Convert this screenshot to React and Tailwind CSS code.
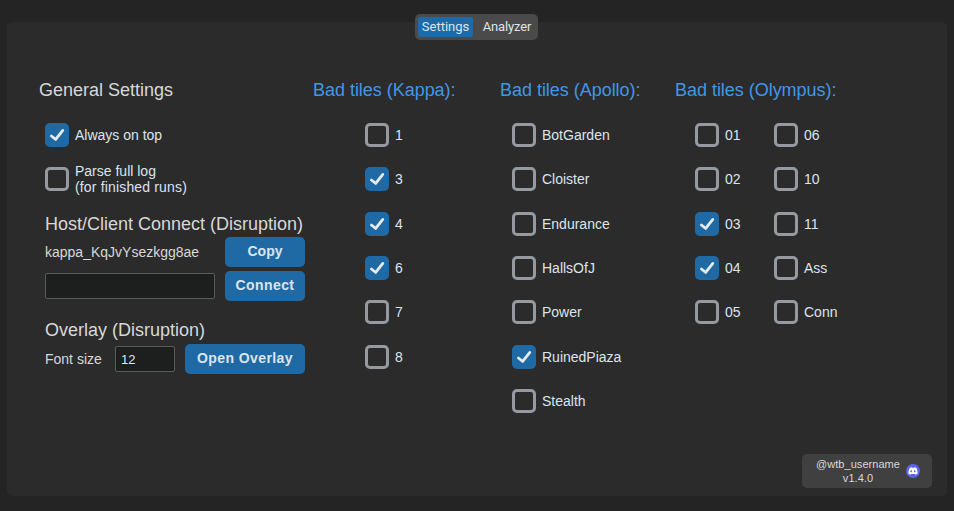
import React from "react";

function Box({ checked }) {
  if (!checked) {
    return <span className="h-6 w-6 shrink-0 rounded-[5px] border-3 border-[#949a9f]" />;
  }
  return (
    <span className="h-6 w-6 shrink-0 rounded-[5px] bg-[#1f6aa5]">
      <svg viewBox="0 0 24 24" className="h-6 w-6" fill="none" stroke="#e6e9ed" strokeWidth="2.8" strokeLinecap="round" strokeLinejoin="round">
        <path d="M6.4 13L10.7 16.4L17.8 7.4" />
      </svg>
    </span>
  );
}

function Check({ label, checked }) {
  return (
    <label className="flex h-[44.33px] items-start gap-1.5 text-[#dce4ee]">
      <Box checked={checked} />
      <span className="leading-6 whitespace-nowrap">{label}</span>
    </label>
  );
}

function Group({ title, pad, columns }) {
  return (
    <section>
      <h2 className="text-lg leading-6 tracking-[-0.03px] whitespace-nowrap text-[#3f97e8]">{title}</h2>
      <div className={`mt-[21px] flex ${pad}`}>
        {columns.map((items, i) => (
          <div key={i} className="w-[79px]">
            {items.map(([label, checked]) => (
              <Check key={label} label={label} checked={checked} />
            ))}
          </div>
        ))}
      </div>
    </section>
  );
}

function Button({ children, width, tracking = "tracking-[0.4px]" }) {
  return (
    <button className={`${width} ${tracking} h-[30px] shrink-0 rounded-[5px] bg-[#1f6aa5] pb-0.5 text-sm leading-7 font-bold whitespace-nowrap text-[#dce4ee]`}>
      {children}
    </button>
  );
}

function Discord() {
  return (
    <svg viewBox="0 0 14 14" className="h-3.5 w-3.5">
      <circle cx="7" cy="7" r="7" fill="#5865f2" />
      <path transform="translate(-0.7 -0.5) scale(1.1)" fill="#fff" fillRule="evenodd" d="M4.1 3.9Q5 3.4 5.9 3.3L6.2 3.8H7.8L8.1 3.3Q9 3.4 9.9 3.9Q11.4 6.3 11.3 9Q10.3 9.9 9.1 10.2L8.6 9.4Q7 9.8 5.4 9.4L4.9 10.2Q3.7 9.9 2.7 9Q2.6 6.3 4.1 3.9ZM5.4 6.1A.8 .9 0 1 0 5.4 7.9A.8 .9 0 1 0 5.4 6.1ZM8.6 6.1A.8 .9 0 1 0 8.6 7.9A.8 .9 0 1 0 8.6 6.1Z" />
    </svg>
  );
}

export default function App() {
  return (
    <div className="flex h-[511px] w-[954px] flex-col bg-[#242424] pt-3.5 font-['Liberation_Sans',Arial,sans-serif] text-sm text-[#d8d8d8]">
      <nav className="z-10 -mb-[18px] ml-[415px] flex h-[26px] w-[123px] rounded-[5px] bg-[#4a4a4a] p-[3px] text-[13px] leading-5 text-[#dce4ee] [font-family:Roboto,sans-serif]">
        <button className="w-[55px] shrink-0 rounded-[2px] bg-[#1f6aa5]">Settings</button>
        <button className="ml-1 w-[60px] shrink-0 text-center tracking-[-0.15px]">Analyzer</button>
      </nav>
      <main className="mx-[7px] flex h-[474px] flex-col rounded-[5px] bg-[#2b2b2b] pt-14 pl-8">
        <div className="flex">
          <section className="w-[274px]">
            <h2 className="text-lg leading-6">General Settings</h2>
            <div className="mt-[21px] ml-1.5 w-[260px]">
              <label className="flex items-center gap-1.5 text-[#dce4ee]">
                <Box checked />
                <span>Always on top</span>
              </label>
              <label className="mt-4 flex items-center gap-1.5 leading-4 text-[#dce4ee]">
                <Box />
                <span>Parse full log<br /><span className="tracking-[0.16px]">(for finished runs)</span></span>
              </label>
              <h2 className="mt-[17px] text-lg leading-6 whitespace-nowrap">Host/Client Connect (Disruption)</h2>
              <div className="mt-px flex items-center justify-between">
                <span>kappa_KqJvYsezkgg8ae</span>
                <Button width="w-20" tracking="tracking-normal">Copy</Button>
              </div>
              <div className="mt-1 flex items-center justify-between">
                <input className="h-[26px] w-[170px] rounded-[2px] border border-[#565b5e] bg-[#1d1e1e] px-1.5" />
                <Button width="w-20">Connect</Button>
              </div>
              <h2 className="mt-[17px] text-lg leading-6">Overlay (Disruption)</h2>
              <div className="mt-0.5 flex items-center">
                <span className="w-[70px]">Font size</span>
                <input className="h-[26px] w-[60px] rounded-[2px] border border-[#565b5e] bg-[#1d1e1e] px-[5px] text-[13px] text-[#dce4ee]" defaultValue="12" />
                <div className="ml-2.5">
                  <Button width="w-[120px]">Open Overlay</Button>
                </div>
              </div>
            </div>
          </section>
          <div className="w-[187px]">
            <Group title="Bad tiles (Kappa):" pad="pl-[52px]" columns={[[["1"], ["3", true], ["4", true], ["6", true], ["7"], ["8"]]]} />
          </div>
          <div className="w-[175px]">
            <Group title="Bad tiles (Apollo):" pad="pl-3" columns={[[["BotGarden"], ["Cloister"], ["Endurance"], ["HallsOfJ"], ["Power"], ["RuinedPiaza", true], ["Stealth"]]]} />
          </div>
          <Group
            title="Bad tiles (Olympus):"
            pad="pl-5"
            columns={[
              [["01"], ["02"], ["03", true], ["04", true], ["05"]],
              [["06"], ["10"], ["11"], ["Ass"], ["Conn"]],
            ]}
          />
        </div>
        <footer className="mt-auto mr-[15px] mb-2 flex h-[34px] w-[130px] items-center gap-1.5 self-end rounded-[5px] bg-[#404040] pl-3.5 text-[11px] leading-3.5">
          <div className="w-[84px] text-center tracking-[0.05px]">@wtb_username<br />v1.4.0</div>
          <Discord />
        </footer>
      </main>
    </div>
  );
}
